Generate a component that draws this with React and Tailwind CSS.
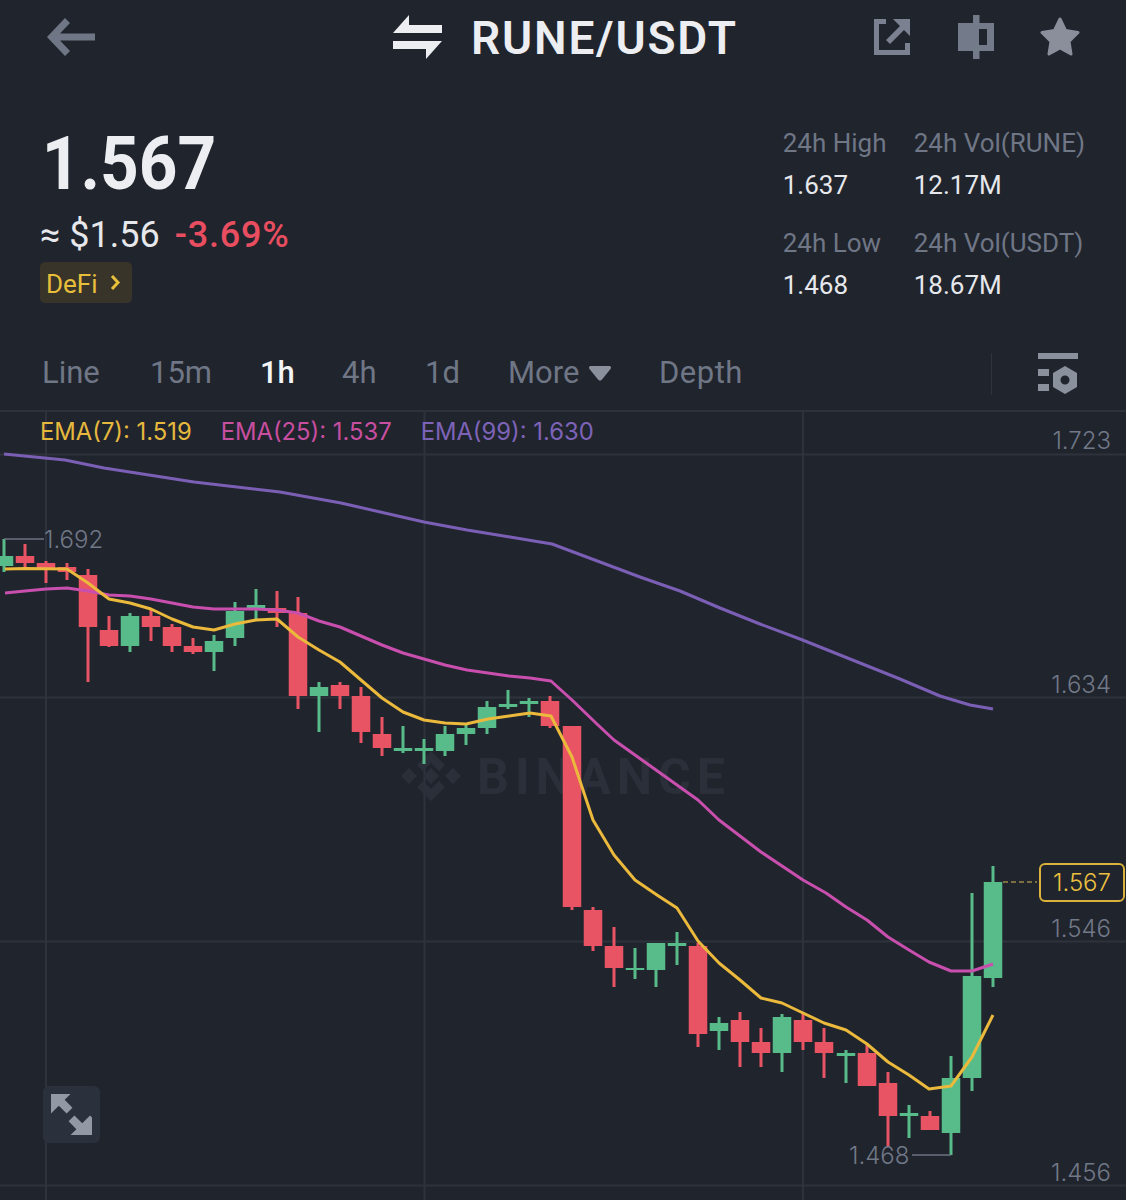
import React from 'react';

// x, wick top, wick bottom, body top, body bottom, colour
const candles = [
  [4, 539, 572, 556, 566, 'g'], [25, 544, 567, 556, 563, 'r'], [46, 561, 583, 563, 568, 'r'], [67, 563, 580, 567, 572, 'r'],
  [88, 569, 682, 575, 627, 'r'], [109, 616, 647, 630, 646, 'r'], [130, 613, 652, 616, 646, 'g'], [151, 610, 641, 616, 627, 'r'],
  [172, 624, 652, 627, 646, 'r'], [193, 638, 654, 646, 652, 'r'], [214, 635, 671, 641, 652, 'g'], [235, 602, 646, 611, 638, 'g'],
  [256, 589, 620, 605, 608, 'g'], [277, 591, 627, 608, 613, 'r'], [298, 597, 709, 613, 696, 'r'], [319, 682, 732, 687, 696, 'g'],
  [340, 682, 709, 685, 696, 'r'], [361, 687, 743, 696, 732, 'r'], [382, 717, 756, 734, 748, 'r'], [403, 726, 753, 748, 751, 'g'],
  [424, 739, 764, 748, 751, 'g'], [445, 726, 756, 734, 751, 'g'], [466, 723, 745, 728, 734, 'g'], [487, 701, 734, 707, 728, 'g'],
  [508, 690, 709, 704, 707, 'g'], [529, 698, 717, 701, 704, 'g'], [550, 696, 728, 701, 726, 'r'], [572, 726, 910, 726, 907, 'r'],
  [593, 907, 951, 910, 946, 'r'], [614, 927, 987, 946, 968, 'r'], [635, 948, 979, 968, 970, 'g'], [656, 943, 987, 943, 970, 'g'],
  [677, 932, 965, 943, 946, 'g'], [698, 943, 1047, 946, 1034, 'r'], [719, 1017, 1050, 1023, 1031, 'g'], [740, 1012, 1067, 1020, 1042, 'r'],
  [761, 1028, 1067, 1042, 1053, 'r'], [782, 1014, 1072, 1017, 1053, 'g'], [803, 1012, 1050, 1020, 1042, 'r'], [824, 1028, 1078, 1042, 1053, 'r'],
  [846, 1050, 1083, 1053, 1056, 'g'], [867, 1045, 1086, 1053, 1086, 'r'], [888, 1072, 1147, 1083, 1116, 'r'], [909, 1105, 1138, 1113, 1116, 'g'],
  [930, 1111, 1130, 1116, 1130, 'r'], [951, 1056, 1155, 1078, 1133, 'g'], [972, 893, 1091, 976, 1078, 'g'], [993, 866, 987, 882, 978, 'g'],
];

const ema7 = '5,569 25,568.5 67,569 88,583 109,599 130,603 151,609 172,619 193,627 214,630 235,624 256,620 277,619 298,637 319,650 340,662 361,680 382,698 403,712 424,720 445,723 466,724 488,719 509,716 530,713 551,716 572,757 593,820 614,855 635,880 657,895 677,908 698,941 719,963 740,980 761,998 782,1003 803,1013 824,1023 846,1030 867,1044 888,1062 909,1075 929,1089 951,1086 972,1057 993,1015';
const ema25 = '5,593 25,591 46,589 67,588 88,591 109,595 130,596 151,599 172,603 193,607 214,609 235,609 256,609 277,610 298,613 319,621 340,627 361,636 382,645 403,653 424,659 445,665 467,670 488,673 509,676 530,678 551,681 572,700 598,725 614,740 635,755 656,770 677,785 698,800 719,820 761,852 803,880 826,893 846,907 867,920 888,937 909,950 929,962 951,971 972,971 993,964';
const ema99 = '4,454 65,460 104,468 194,482 280,492 341,503 424,522 467,530 510,537 552,544 600,562 640,577 680,591 720,608 760,624 800,639 850,659 900,679 940,696 970,705 993,709';

const axisLabels = [['1.723', 449], ['1.634', 693], ['1.546', 937], ['1.456', 1181]];

function Chart() {
  return (
    <svg viewBox="0 410 1126 790" className="block h-[790px] w-[1126px]">
      <g stroke="#2d323d" strokeWidth="2">
        <path d="M0 411H1126M0 454.500H1126M0 697.500H1126M0 941.500H1126M0 1185.500H1126" />
        <path d="M46 410V1200M424.500 410V1200M803 410V1200" />
      </g>

      {/* watermark */}
      <g fill="#2b2f39">
        <path d="M431 751l14 14-6 6-8-8-8 8-6-6zM431 801l-14-14 6-6 8 8 8-8 6 6zM431 768l8 8-8 8-8-8zM409 768l8 8-8 8-8-8zM453 768l8 8-8 8-8-8z" />
        <text x="477" y="794" fontSize="50" fontWeight="700" letterSpacing="6" fontFamily="Roboto, sans-serif">BINANCE</text>
      </g>

      <polyline points={ema99} fill="none" stroke="#7b5fb5" strokeWidth="3" strokeLinejoin="round" />

      {candles.map(([x, wt, wb, bt, bb, c]) => (
        <g key={x} fill={c === 'g' ? '#58bb8a' : '#e95464'}>
          <rect x={x - 1.5} y={wt} width="3" height={wb - wt} />
          <rect x={x - 9.25} y={bt} width="18.500" height={bb - bt} />
        </g>
      ))}

      <polyline points={ema25} fill="none" stroke="#c94fae" strokeWidth="3" strokeLinejoin="round" />
      <polyline points={ema7} fill="none" stroke="#ebb93c" strokeWidth="3" strokeLinejoin="round" />

      <g fill="#717887" fontSize="24" fontWeight="300" fontFamily="Inter, sans-serif">
        {axisLabels.map(([t, y]) => (
          <text key={t} x="1111" y={y} textAnchor="end">{t}</text>
        ))}
        <text x="44" y="548">1.692</text>
        <text x="849" y="1164">1.468</text>
      </g>
      <path d="M4 539H44M912 1155H951" stroke="#6b7280" strokeWidth="1.500" fill="none" />

      <path d="M1003 882H1037" stroke="#7d7040" strokeWidth="2" strokeDasharray="5 3" />
    </svg>
  );
}

function IconArrowBack() {
  return (
    <svg viewBox="0 0 48 38" className="h-[38px] w-[48px]" fill="#6f7685">
      <path d="M0 19 18 0l5 5-10 10.500h35v7H13l10 10.500-5 5z" />
    </svg>
  );
}

function IconSwap() {
  return (
    <svg viewBox="0 0 49 44" className="h-[44px] w-[49px]" fill="#eceef1">
      <path d="M16 0v10h33v8H0zM33 44V34H0v-8h49z" />
    </svg>
  );
}

function IconShare() {
  return (
    <svg viewBox="0 0 36 36" className="h-[36px] w-[36px]" fill="#7b8190">
      <path d="M0 0h12v5H5v26h26v-7h5v12H0z" />
      <path d="M19 0h17v17l-6-6-14 14-4-4 14-14z" />
    </svg>
  );
}

function IconCandle() {
  return (
    <svg viewBox="0 0 36 44" className="h-[44px] w-[36px]" fill="#737a8a" fillRule="evenodd">
      <path d="M15 0h6.500v8H36v28H21.500v8H15v-8H0V8h15zM21 14v16h8V14z" />
    </svg>
  );
}

function IconStar() {
  return (
    <svg viewBox="0 0 40 40" className="h-[40px] w-[40px]" fill="#8a8f9b" stroke="#8a8f9b" strokeWidth="3" strokeLinejoin="round">
      <path d="M20 2l5.500 11.500L38 15.500l-9 9L31 37l-11-6-11 6 2-12.500-9-9 12.500-2z" />
    </svg>
  );
}

function IconSettings() {
  return (
    <svg viewBox="0 0 41 41" className="h-[41px] w-[41px]" fill="#8a909c">
      <path d="M0 0h40v6H0zM0 16h11v7H0zM0 31h11v7H0z" />
      <path fillRule="evenodd" d="M27 13l12 7v14l-12 7-12-7V20zM27 22.500a4.500 4.500 0 1 0 0 9 4.500 4.500 0 0 0 0-9z" />
    </svg>
  );
}

function IconExpand() {
  return (
    <svg viewBox="0 0 42 42" className="h-[41px] w-[41px]" fill="#9299a5">
      <path d="M0 0h20l-6 6 8 8-6 6-8-8-8 8zM42 42H20l6-6-8-8 6-6 8 8 8-8 6 6z" />
    </svg>
  );
}

function Stat({ label, value }) {
  return (
    <div>
      <div className="text-[26px] leading-[36px] text-[#6f7685]">{label}</div>
      <div className="mt-[6px] text-[26px] leading-[36px] text-[#e6e8ec]">{value}</div>
    </div>
  );
}

export default function App() {
  const tabs = [
    ['Line', 'w-[108px]'],
    ['15m', 'w-[110px]'],
    ['1h', 'w-[82px] font-medium text-[#f3f4f6]'],
    ['4h', 'w-[83px]'],
    ['1d', 'w-[83px]'],
  ];

  return (
    <div className="h-[1200px] w-[1126px] overflow-hidden bg-[#20242d] font-['Roboto',sans-serif]">
      <header className="flex h-[73px] items-center pl-[47px]">
        <IconArrowBack />
        <div className="ml-[298px] flex items-center">
          <IconSwap />
          <h1 className="ml-[29px] mt-[3px] w-[267px] whitespace-nowrap text-[46px] font-semibold leading-none tracking-[1.8px] text-[#eceef1]">RUNE/USDT</h1>
        </div>
        <div className="ml-[136px] flex items-center">
          <IconShare />
          <div className="ml-[48px]"><IconCandle /></div>
          <div className="ml-[46px]"><IconStar /></div>
        </div>
      </header>

      <section className="flex h-[272px] justify-between pl-[40px] pr-[40px] pt-[52px]">
        <div>
          <div className="origin-left scale-x-[0.9] pl-[2px] text-[75px] font-bold leading-[76px] text-[#eceef1]">1.567</div>
          <div className="mt-[11px] flex items-center text-[36px] leading-[46px]">
            <span className="text-[#e6e8ec]">≈ $1.56</span>
            <span className="ml-[15px] font-medium tracking-[0.8px] text-[#e84e60]">-3.69%</span>
          </div>
          <div className="mt-[4px] flex h-[41px] w-[92px] items-center rounded-[5px] bg-[#38342a] pl-[6px] pt-[4px] text-[26px] text-[#e8bf3a]">
            DeFi
            <svg viewBox="0 0 11 15" className="ml-[12px] h-[15px] w-[11px] -translate-y-[2px]" fill="none" stroke="#e8bf3a" strokeWidth="3">
              <path d="M2 1l6 6.500-6 6.500" />
            </svg>
          </div>
        </div>
        <div className="grid grid-cols-[131px_auto] content-start gap-y-[22px] pr-[1px]">
          <Stat label="24h High" value="1.637" />
          <Stat label="24h Vol(RUNE)" value="12.17M" />
          <Stat label="24h Low" value="1.468" />
          <Stat label="24h Vol(USDT)" value="18.67M" />
        </div>
      </section>

      <nav className="flex h-[65px] items-center pb-[8px] pl-[42px] text-[31px] text-[#6f7685]">
        {tabs.map(([t, c]) => (
          <div key={t} className={c}>{t}</div>
        ))}
        <div className="flex w-[151px] items-center">
          More
          <svg viewBox="0 0 22 15" className="ml-[10px] h-[15px] w-[22px]" fill="#8a909c">
            <path d="M2 0h18c2 0 2.500 1.500 1.500 3L13 13.500c-1 1.500-3 1.500-4 0L.5 3C-.5 1.500 0 0 2 0z" />
          </svg>
        </div>
        <div className="w-[332px] tracking-[0.5px]">Depth</div>
        <div className="h-[42px] w-[1px] bg-[#2e333e]" />
        <div className="ml-[46px]"><IconSettings /></div>
      </nav>

      <div className="relative">
        <Chart />
        <div className="absolute left-[40px] top-[7px] flex gap-[29px] font-['Inter',sans-serif] text-[23.8px] leading-[30px]">
          <span className="text-[#e6b93d]">EMA(7): 1.519</span>
          <span className="text-[#c84ea0]">EMA(25): 1.537</span>
          <span className="text-[#7d63b8]">EMA(99): 1.630</span>
        </div>
        <div className="absolute left-[1039px] top-[453px] flex h-[39px] w-[86px] items-center justify-center rounded-[6px] border-2 border-[#d9b13b] bg-[#20242d] font-['Inter',sans-serif] text-[24px] font-light text-[#ebc040]">
          1.567
        </div>
        <div className="absolute left-[43px] top-[676px] flex h-[57px] w-[57px] items-center justify-center rounded-[6px] bg-[#2a303c]">
          <IconExpand />
        </div>
      </div>
    </div>
  );
}
